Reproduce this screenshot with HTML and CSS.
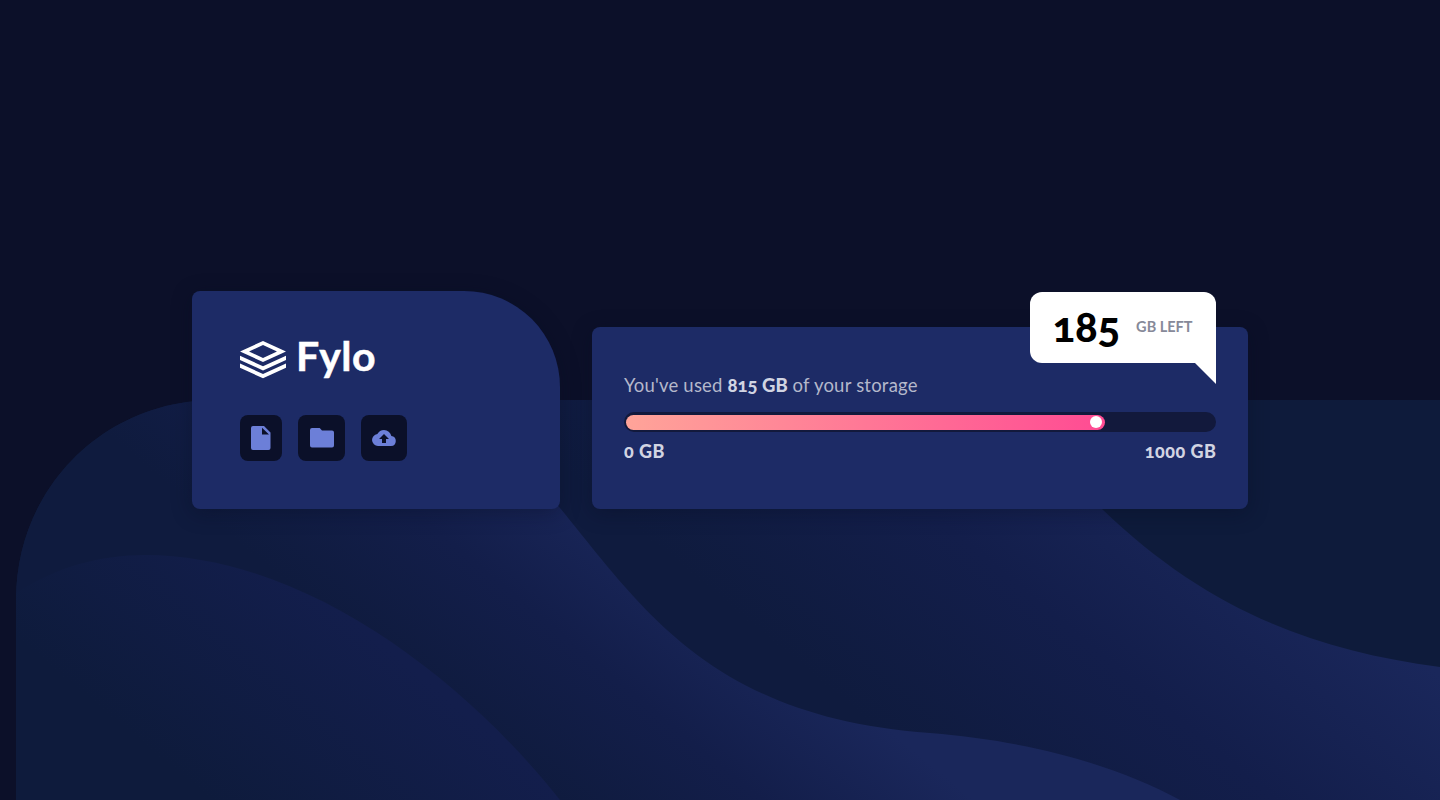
FILE: index.html
```html
<!DOCTYPE html>
<html lang="en">
<head>
<meta charset="utf-8">
<title>Fylo data storage</title>
<link rel="stylesheet" href="styles.css">
</head>
<body>
<svg class="backdrop" viewBox="0 400 1440 400" preserveAspectRatio="none" aria-hidden="true">
  <defs>
    <linearGradient id="g0" gradientUnits="userSpaceOnUse" x1="-307" y1="370" x2="-160" y2="193"><stop stop-color="#0e1b3c"/><stop offset="1" stop-color="#131e4c"/></linearGradient>
    <linearGradient id="g1" gradientUnits="userSpaceOnUse" x1="-170" y1="205" x2="3" y2="-4"><stop stop-color="#0f1b3e"/><stop offset=".5" stop-color="#131e4a"/><stop offset="1" stop-color="#1a275b"/></linearGradient>
    <linearGradient id="g2" gradientUnits="userSpaceOnUse" x1="0" y1="0" x2="256" y2="-308"><stop stop-color="#0f1b3e"/><stop offset=".5" stop-color="#131e4b"/><stop offset="1" stop-color="#1a275b"/></linearGradient>
    <clipPath id="panel"><path d="M16 800V600C16 488 104 400 216 400H1440V800Z"/></clipPath>
  </defs>
  <g clip-path="url(#panel)">
    <path fill="#0e1b3b" d="M0 400H1440V800H0Z"/>
    <path fill="url(#g2)" d="M500 400H1018C1045 445 1072 480 1102 509C1205 608 1310 650 1440 667V800H500Z"/>
    <path fill="url(#g1)" d="M0 400H465C500 430 530 472 560 508C640 605 710 718 930 733C1040 742 1120 768 1180 800H0Z"/>
    <path fill="url(#g0)" d="M0 604C45 570 95 555 145 555C305 555 465 680 560 800H0Z"/>
  </g>
</svg>
<main class="storage">
  <section class="card brand-card">
    <div class="logo">
      <svg class="logo-mark" viewBox="0 0 46 38" aria-hidden="true">
        <path fill="#fff" fill-rule="evenodd" d="M23 0L46 10.500 23 21 0 10.500ZM23 4L9 10.500 23 17 37 10.500Z"/>
        <path fill="#fff" d="M0 14.800L23 25.200 46 14.800V19L23 29.400 0 19ZM0 22.600L23 33 46 22.600V26.800L23 37.200 0 26.800Z"/>
      </svg>
      <span class="logo-name">Fylo</span>
    </div>
    <div class="actions">
      <span class="action file"><svg width="20" height="24" viewBox="0 0 20 24"><path fill-rule="evenodd" d="M2 0H13L19.500 6.500V22Q19.500 24 17.500 24H2Q0 24 0 22V2Q0 0 2 0ZM11 1.800V8.500H18Z"/></svg></span>
      <span class="action folder"><svg width="24" height="20" viewBox="0 0 24 20"><path d="M22 2.500H12L9.700 0H2Q0 0 0 2V17.400Q0 19.400 2 19.400H22Q24 19.400 24 17.400V4.500Q24 2.500 22 2.500Z"/></svg></span>
      <span class="action cloud"><svg width="24" height="16" viewBox="0 0 24 16"><path d="M19.350 6.040A7.490 7.490 0 0 0 12 0C9.110 0 6.600 1.640 5.350 4.040A6 6 0 0 0 6 16H19A5 5 0 0 0 19.350 6.040ZM14 9V13H10V9H7L12 4L17 9Z"/></svg></span>
    </div>
  </section>
  <section class="card usage-card">
    <p class="usage">You've used <b>815 GB</b> of your storage</p>
    <div class="track"><div class="fill" style="width:81.500%"><i class="knob"></i></div></div>
    <div class="scale"><span class="min">0 GB</span><span class="max">1000 GB</span></div>
    <div class="bubble"><strong class="left-value">185</strong><span class="left-label">GB LEFT</span></div>
  </section>
</main>
</body>
</html>
```
FILE: styles.css
```css
* { box-sizing: border-box; }
body {
  margin: 0;
  height: 100vh;
  overflow: hidden;
  background: #0c1029;
  font-family: Lato, "Open Sans", sans-serif;
  font-variant-numeric: oldstyle-nums;
}
.backdrop { position: absolute; left: 0; bottom: 0; width: 100%; height: 400px; }
.storage {
  position: relative;
  width: 1056px;
  height: 800px;
  margin: 0 auto;
  display: flex;
  align-items: flex-end;
  gap: 32px;
  padding-bottom: 291px;
}
.card { background: #1d2b66; border-radius: 8px; box-shadow: 0 4px 20px rgba(8, 12, 34, .38); }
.brand-card { width: 368px; height: 218px; border-top-right-radius: 96px; padding: 48px; }
.logo { display: flex; height: 40px; }
.logo-mark { width: 46px; height: 38px; margin-top: 2px; }
.logo-name { margin-left: 10px; color: #fff; font-weight: 700; font-size: 41px; line-height: 33px; letter-spacing: .5px; -webkit-text-stroke: .5px #fff; white-space: nowrap; }
.actions { display: flex; gap: 16px; margin-top: 36px; }
.action { height: 46px; border-radius: 8px; background: #0b1029; display: flex; align-items: center; justify-content: center; }
.action svg { fill: #6c7fd8; }
.file { width: 42px; }
.folder { width: 47px; }
.cloud { width: 46px; }
.usage-card { position: relative; width: 656px; height: 182px; padding: 44px 32px 0; }
.usage { margin: 0; height: 28px; font-size: 18.500px; letter-spacing: .210px; line-height: 28px; color: #b4b8cb; white-space: nowrap; }
.usage b { color: #d1d4e2; font-weight: 900; letter-spacing: 0; }
.track { height: 20px; margin-top: 13px; padding: 3px 2px 2px; border-radius: 10px; background: #12193c; }
.fill { height: 15px; border-radius: 8px; background: linear-gradient(90deg, #ffa499, #ff4b93); display: flex; justify-content: flex-end; align-items: flex-start; padding: 1px 3px 0 0; }
.knob { width: 12px; height: 12px; border-radius: 50%; background: #fff; }
.scale { display: flex; justify-content: space-between; margin-top: 5px; font-size: 18px; line-height: 28px; font-weight: 900; color: #d1d4e2; letter-spacing: .5px; }
.max { margin-right: -.5px; }
.bubble {
  position: absolute;
  right: 32px;
  top: -35px;
  width: 186px;
  height: 71px;
  padding: 0 23.500px;
  display: flex;
  justify-content: space-between;
  align-items: flex-start;
  border-radius: 12px 12px 0 12px;
  background: #fff;
}
.bubble::after {
  content: "";
  position: absolute;
  right: 0;
  top: 100%;
  width: 21px;
  height: 21px;
  background: #fff;
  clip-path: polygon(0 0, 100% 0, 100% 100%);
}
.left-value { font-size: 42px; font-weight: 900; letter-spacing: -.2px; line-height: 69px; margin-left: -1px; color: #000; }
.left-label { font-size: 14.500px; font-weight: 700; line-height: 70px; color: #868999; white-space: nowrap; }
```
